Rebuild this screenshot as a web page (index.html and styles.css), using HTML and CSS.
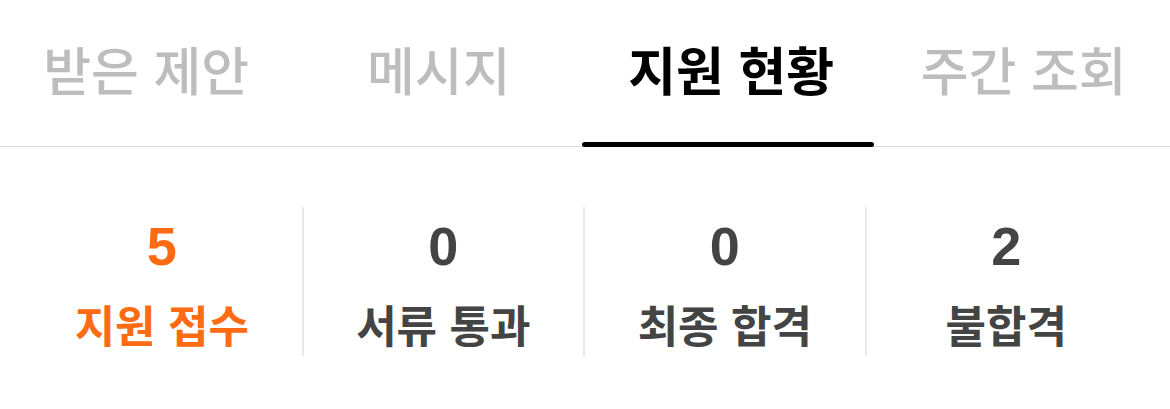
FILE: index.html
```html
<!DOCTYPE html>
<html lang="ko">
<head>
	<meta charset="utf-8">
	<title>지원 현황</title>
	<link rel="stylesheet" href="styles.css">
</head>
<body>
	<nav class="tabs">
		<a class="tab">받은 제안</a>
		<a class="tab">메시지</a>
		<a class="tab active">지원 현황</a>
		<a class="tab">주간 조회</a>
	</nav>
	<section class="stats">
		<div class="stat highlight">
			<div class="count">5</div>
			<div class="label">지원 접수</div>
		</div>
		<div class="stat">
			<div class="count">0</div>
			<div class="label">서류 통과</div>
		</div>
		<div class="stat">
			<div class="count">0</div>
			<div class="label">최종 합격</div>
		</div>
		<div class="stat">
			<div class="count">2</div>
			<div class="label">불합격</div>
		</div>
	</section>
</body>
</html>
```

FILE: styles.css
```css
body {
	margin: 0;
	background: #fff;
	font-family: "Noto Sans CJK KR", "Noto Sans", sans-serif;
	color: #444;
}

.tabs {
	display: flex;
	border-bottom: 1px solid #dadada;
}

.tab {
	position: relative;
	flex: 1;
	height: 146px;
	padding-top: 39px;
	box-sizing: border-box;
	text-align: center;
	font-size: 52px;
	line-height: 60px;
	font-weight: 500;
	color: #bdbdbd;
}

.tab.active {
	color: #000;
	font-weight: 700;
}

/* active tab underline sits on top of the divider */
.tab.active::after {
	content: "";
	position: absolute;
	left: -3px;
	right: 4px;
	bottom: -1px;
	height: 5px;
	border-radius: 3px;
	background: #000;
}

.stats {
	display: flex;
	margin-top: 60px;
	padding: 0 24px 0 22px;
}

.stat {
	flex: 1;
	height: 149px;
	padding-top: 10px;
	box-sizing: border-box;
	text-align: center;
}

.stat + .stat {
	border-left: 2px solid #e8e8e4;
}

.count {
	font-family: "Liberation Sans", Arial, sans-serif;
	font-size: 54px;
	font-weight: 700;
	line-height: 58px;
	margin-bottom: 21px;
}

.label {
	font-size: 44px;
	font-weight: 700;
	line-height: 56px;
}

.highlight {
	color: #ff6b12;
}
```
